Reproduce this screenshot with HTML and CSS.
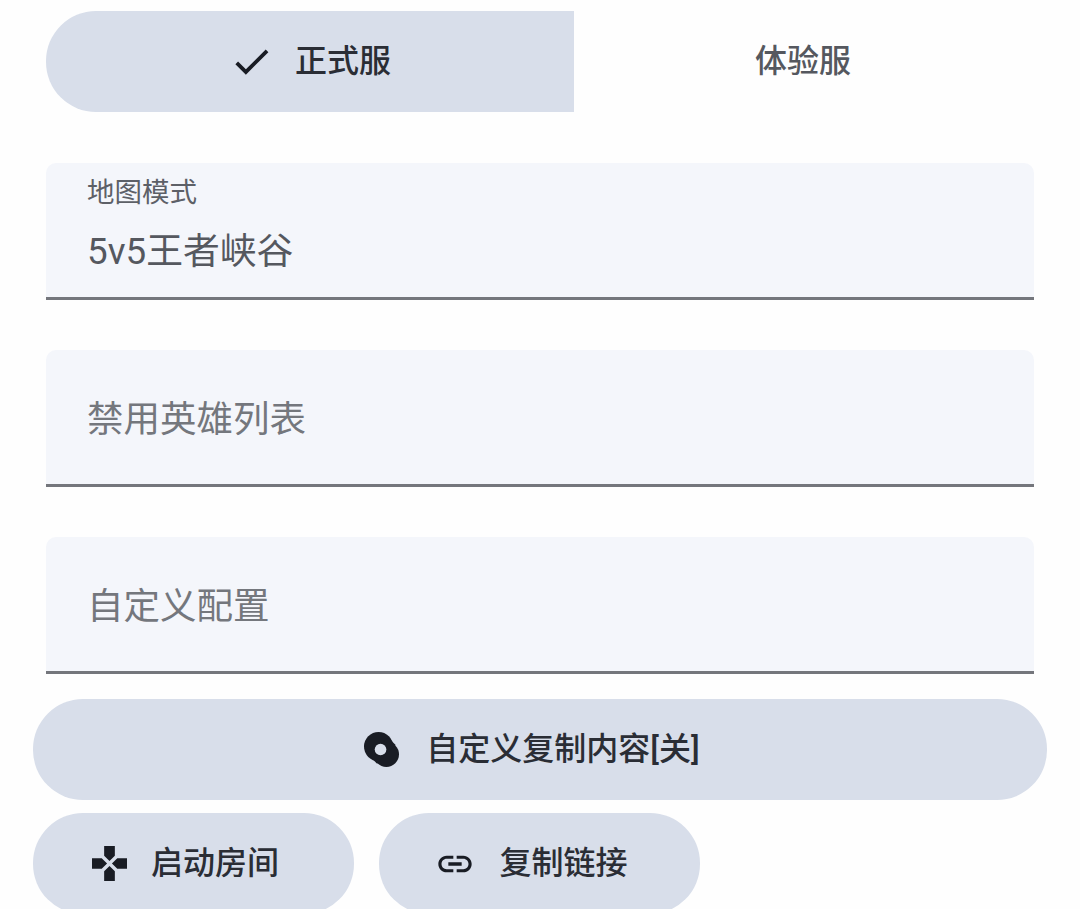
FILE: index.html
```html
<!DOCTYPE html>
<html lang="zh">
<head>
<meta charset="utf-8">
<title>房间配置</title>
<link rel="stylesheet" href="styles.css">
</head>
<body>
<main class="page">
  <div class="segments">
    <button class="seg seg-on">
      <svg class="ico-check" viewBox="0 0 24 24"><path d="M9 16.170 4.830 12l-1.420 1.410L9 19 21 7l-1.410-1.410z"/></svg>
      <span class="btn-text">正式服</span>
    </button>
    <button class="seg seg-off"><span class="btn-text">体验服</span></button>
  </div>

  <div class="field">
    <div class="field-label">地图模式</div>
    <div class="field-value">5v5王者峡谷</div>
  </div>
  <div class="field field-empty"><span class="placeholder">禁用英雄列表</span></div>
  <div class="field field-empty field-last"><span class="placeholder">自定义配置</span></div>

  <button class="btn btn-wide">
    <svg class="ico" viewBox="0 0 36 36">
      <circle cx="15" cy="15" r="15"/>
      <circle cx="23" cy="23" r="13"/>
      <path class="egg-fill" d="M15 15 23 23"/>
      <circle class="egg-hole" cx="17" cy="18" r="6"/>
    </svg>
    <span class="btn-text">自定义复制内容[关]</span>
  </button>

  <div class="btn-row">
    <button class="btn btn-small">
      <svg class="ico" viewBox="0 0 36 36"><path d="M12.500 0H23.500V10L18 15.500L12.500 10ZM0 12.500H10L15.500 18L10 23.500H0ZM36 12.500H26L20.500 18L26 23.500H36ZM18 20.500L23.500 26V36H12.500V26Z"/></svg>
      <span class="btn-text">启动房间</span>
    </button>
    <button class="btn btn-small">
      <svg class="ico-link" viewBox="0 0 24 24"><path d="M3.900 12c0-1.710 1.390-3.100 3.100-3.100h4V7H7c-2.760 0-5 2.240-5 5s2.240 5 5 5h4v-1.900H7c-1.710 0-3.100-1.390-3.100-3.100zM8 13h8v-2H8v2zm9-6h-4v1.900h4c1.710 0 3.100 1.390 3.100 3.100s-1.390 3.100-3.100 3.100h-4V17h4c2.760 0 5-2.240 5-5s-2.240-5-5-5z"/></svg>
      <span class="btn-text">复制链接</span>
    </button>
  </div>
</main>
</body>
</html>
```

FILE: styles.css
```css
* { box-sizing: border-box; }

html, body {
  margin: 0;
  height: 909px;
  overflow: hidden;
  background: #fefefe;
  font-family: Roboto, "Noto Sans CJK SC", sans-serif;
}

.page {
  padding: 11px 33px 0;
  display: flex;
  flex-direction: column;
}

button {
  border: 0;
  font: inherit;
  display: flex;
  align-items: center;
  justify-content: center;
}

.btn-text {
  line-height: 40px;
  margin-bottom: 2px;
}

.segments {
  display: flex;
  margin: 0 13px 51px;
  height: 101px;
}

.seg {
  font-size: 32px;
  font-weight: 500;
  padding: 0;
}

.seg-on {
  flex: 528 0 0;
  background: #d8deea;
  color: #2a2d35;
  border-radius: 50px 0 0 50px;
  gap: 21px;
}

.seg-off {
  flex: 460 0 0;
  background: transparent;
  color: #55585f;
}

.seg-off .btn-text { margin-right: 2px; }

.ico-check {
  width: 45px;
  height: 45px;
  fill: #191c24;
}

.field {
  margin: 0 13px 50px;
  height: 137px;
  background: #f4f6fb;
  border-radius: 10px 10px 0 0;
  border-bottom: 3px solid #74767c;
  padding: 0 41px;
}

.field-last { margin-bottom: 25px; }

.field-empty {
  display: flex;
  align-items: center;
  padding-bottom: 2px;
}

.field-label {
  font-size: 27.500px;
  line-height: 32px;
  padding-top: 14px;
  color: #5d6067;
}

.field-value {
  font-size: 36.800px;
  line-height: 44px;
  margin-top: 21px;
  color: #55585f;
}

.placeholder {
  font-size: 36.500px;
  color: #74777d;
}

.btn {
  height: 101px;
  border-radius: 50px;
  background: #d8deea;
  color: #2a2d35;
  font-size: 32px;
  font-weight: 500;
  padding: 0;
  flex: none;
}

.btn-wide {
  gap: 27px;
  padding-right: 16px;
  margin-bottom: 13px;
}

.btn-row {
  display: flex;
  gap: 25px;
}

.btn-small {
  width: 321px;
  gap: 24px;
  padding-right: 16px;
}

.ico {
  width: 35px;
  height: 35px;
  fill: #191c24;
}

.egg-fill {
  fill: none;
  stroke: #191c24;
  stroke-width: 27px;
}

.egg-hole { fill: #d8deea; }

.ico-link {
  width: 40px;
  height: 40px;
  fill: #191c24;
}
```
